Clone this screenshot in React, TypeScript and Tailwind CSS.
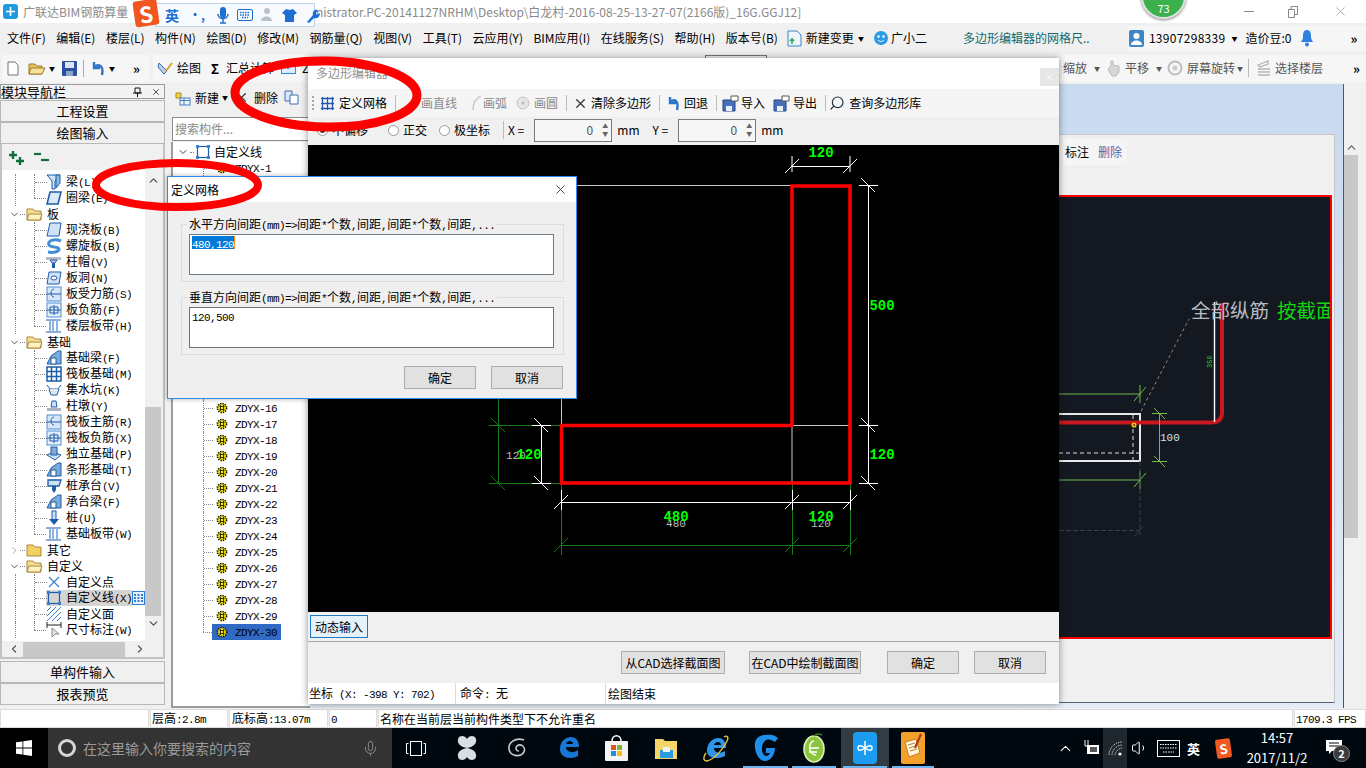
import { ChevronDown, ChevronRight, ChevronUp, ChevronLeft, X, Search, Mic, Volume1 } from "lucide-react";
import type { ReactNode } from "react";

const MONO = "font-['Liberation_Mono',monospace] text-[11px] tracking-[-0.6px]";

// SimSun look: ascii half width, cjk full width
function Sim({ t }: { t: string }) {
  return (
    <span className="whitespace-pre">
      {t.split(/([\x20-\x7e]+)/).map((p, i) =>
        /^[\x20-\x7e]+$/.test(p) ? (
          <span key={i} className={MONO}>{p}</span>
        ) : (
          <span key={i}>{p}</span>
        )
      )}
    </span>
  );
}

function Svg({ w = 16, h = 16, vb, children, className }: { w?: number; h?: number; vb?: string; children: ReactNode; className?: string }) {
  return (
    <svg width={w} height={h} viewBox={vb || `0 0 ${w} ${h}`} fill="none" className={"shrink-0 " + (className || "")}>
      {children}
    </svg>
  );
}

const B = "#1d5cab";
const treeIcons: Record<string, ReactNode> = {
  beam: <><path d="M1 1h13l-5 6v8H6V7z" fill="#cfe2f5" stroke={B} /><path d="M10 1h4v8l-4 5z" fill="#8fb9e4" stroke={B} /></>,
  ring: <path d="M4 2h11l-3 12H1z" fill="#dbe9f8" stroke={B} strokeWidth="1.6" />,
  slab: <path d="M4 1h11l-2 13H1z" fill="#cfe2f5" stroke={B} />,
  spiral: <path d="M15 3C8 0 1 3 3 7c2 3 9 1 10 4 0 3-6 4-11 3" stroke="#3f8fd9" strokeWidth="3" />,
  cap: <><rect x="0" y="3" width="15" height="3" fill="#b7bcc4" /><path d="M4 6h7l-2 3H6z" fill="#ccd" stroke={B} /><rect x="6" y="9" width="3" height="5" fill={B} /></>,
  hole: <><path d="M3 2h12l-2 12H1z" fill="#cfe2f5" stroke={B} /><ellipse cx="8" cy="8" rx="3" ry="2" fill="#fff" stroke={B} /></>,
  rebar: <><rect x="1" y="1" width="14" height="14" fill="#d6e6f7" stroke="#4f8fd3" /><path d="M1 8h14M8 3c-4 0-4 8 0 8" stroke={B} /></>,
  neg: <><rect x="1" y="1" width="14" height="14" fill="#e4eef9" stroke="#4f8fd3" /><path d="M1 8h14M4 5h8v6H4zM8 3v10" stroke={B} /></>,
  band: <><path d="M0 2h15M0 14h15" stroke={B} /><path d="M4 3v10M11 3v10M7 3v10" stroke="#5c95d6" strokeWidth="1.4" /></>,
  fbeam: <><path d="M1 14l4-8 7-5h3v13z" fill="#7fa9d8" stroke={B} /><path d="M5 14V8h5v6z" fill="#fff" stroke={B} /></>,
  raft: <><rect x="1" y="1" width="14" height="14" fill="#fff" stroke={B} strokeWidth="1.5" /><path d="M1 5.5h14M1 10.5h14M5.5 1v14M10.5 1v14" stroke={B} strokeWidth="1.5" /></>,
  pit: <><path d="M1 3l3 4h8l3-4" stroke={B} /><path d="M3 7l2 6h6l2-6" fill="#dfe6ee" stroke={B} /></>,
  pier: <><path d="M6 3h4l1 6H5z" fill="#cfe2f5" stroke={B} /><rect x="1" y="10" width="14" height="3" fill="#aab4c0" /></>,
  alone: <><path d="M1 9l6-3 8 3-6 5z" fill="#cfe2f5" stroke={B} /><rect x="5" y="1" width="6" height="8" fill="#7fa9d8" stroke={B} /></>,
  cap2: <><path d="M2 2h13l-2 6H2z" fill="#cfe2f5" stroke={B} strokeWidth="1.3" /><rect x="6" y="8" width="4" height="4" fill={B} /><path d="M6 12h4l-2 3z" fill={B} /></>,
  pile: <><rect x="6" y="1" width="4" height="9" fill="#cfe2f5" stroke={B} /><path d="M3 9h10l-5 6z" fill={B} /></>,
  point: <path d="M3 3l10 10M13 3L3 13" stroke="#3b7fcf" strokeWidth="1.3" />,
  line: <><rect x="2.5" y="2.5" width="11" height="11" stroke={B} strokeWidth="1.2" /><rect x="1" y="1" width="3" height="3" fill="#3b7fcf" /><rect x="12" y="1" width="3" height="3" fill="#3b7fcf" /><rect x="1" y="12" width="3" height="3" fill="#3b7fcf" /><rect x="12" y="12" width="3" height="3" fill="#3b7fcf" /></>,
  face: <path d="M1 5L5 1M1 10L10 1M1 15L15 1M6 15L15 6M11 15l4-4M3 3L1 5" stroke="#3b7fcf" />,
  dim: <><path d="M1 3h14M1 0v6M15 0v6" stroke="#222" /><path d="M6 6l0 9 3-3 4 0z" fill="#e8e8e8" stroke="#888" /></>,
};

function Folder({ open }: { open?: boolean }) {
  return (
    <Svg w={17} h={14}>
      <path d="M1 2h6l2 2h6v9H1z" fill={open ? "#f6dc95" : "#f4cf63"} stroke="#a98a3c" />
      {open && <path d="M3 7h13l-2 6H1z" fill="#fdf0c0" stroke="#a98a3c" />}
    </Svg>
  );
}

function Leaf({ icon, t, last, sel }: { icon: string; t: string; last?: boolean; sel?: boolean }) {
  return (
    <div className="flex h-4 items-center">
      <span className="ml-[13px] h-4 w-[19px] border-l border-dotted border-[#888]" />
      <span className={"relative h-4 w-[12px] border-dotted border-[#888] " + (last ? "" : "border-l")}>
        {last && <span className="absolute left-0 top-0 h-2 border-l border-dotted border-[#888]" />}
        <span className="absolute left-0 top-2 w-[12px] border-t border-dotted border-[#888]" />
      </span>
      <span className={"flex h-4 items-center " + (sel ? "bg-[#d4d4d4]" : "")}>
        <Svg>{treeIcons[icon]}</Svg>
        <span className="ml-[4px] text-[12px] leading-4 text-black"><Sim t={t} /></span>
      </span>
      {sel && (
        <Svg w={13} h={14} className="bg-[#e9f1fb]">
          <rect x="0.5" y="0.5" width="12" height="13" stroke="#2f7fd6" />
          <path d="M3 3v8M6.5 3v8M10 3v8" stroke="#2f7fd6" strokeWidth="2" strokeDasharray="2 1" />
        </Svg>
      )}
    </div>
  );
}

function Group({ t, open = true }: { t: string; open?: boolean }) {
  return (
    <div className="flex h-4 items-center">
      <span className="ml-[7px] w-[11px]">
        {open ? <ChevronDown size={11} strokeWidth={2} className="text-[#444]" /> : <ChevronRight size={11} strokeWidth={2} className="text-[#999]" />}
      </span>
      <span className="mr-[1px] w-[5px] border-t border-dotted border-[#888]" />
      <Folder open={open} />
      <span className="ml-[4px] text-[12px] leading-4 text-black">{t}</span>
    </div>
  );
}

function Gear() {
  return (
    <Svg w={12} h={12}>
      <circle cx="6" cy="6" r="4.6" fill="#f3e300" stroke="#111" strokeDasharray="1.4 1" strokeWidth="1.6" />
      <path d="M3.5 4.5h5M3.5 7.5h5M4.5 3v6M7.5 3v6" stroke="#111" strokeWidth="0.8" />
    </Svg>
  );
}

function NavButton({ t }: { t: string }) {
  return (
    <div className="flex h-[22px] items-center justify-center border border-[#b8b8b8] bg-[#f0f0f0] text-[13px] leading-4 text-black">
      {t}
    </div>
  );
}

function LeftNav() {
  return (
    <div className="flex w-[165px] shrink-0 flex-col">
      <div className="flex h-[15px] items-center justify-between border border-[#9a9a9a] bg-[#f3f3f3] pr-[3px] text-[13px] leading-none text-black">
        <span>模块导航栏</span>
        <span className="flex items-center gap-[9px]">
          <Svg w={9} h={10}><path d="M2 1h5v5H2zM0 6h9M4.5 6v4" stroke="#111" /></Svg>
          <X size={10} className="text-[#333]" />
        </span>
      </div>
      <div className="mt-[1px] flex flex-col">
        <NavButton t="工程设置" />
        <NavButton t="绘图输入" />
      </div>
      <div className="flex h-[515px] flex-col border-2 border-[#c2c2c2] border-t-0 bg-[#f0f0f0]">
        <div className="flex h-[26px] shrink-0 items-center gap-[9px] pl-[5px]">
          <Svg w={18} h={17}>
            <path d="M6 2v8M2 6h8" stroke="#0e6f3c" strokeWidth="2.4" />
            <path d="M13 8v8M9 12h8" stroke="#0e6f3c" strokeWidth="2.4" />
          </Svg>
          <Svg w={16} h={12}>
            <path d="M0 3h7" stroke="#0e6f3c" strokeWidth="2.2" />
            <path d="M7 9h8" stroke="#0e6f3c" strokeWidth="2.2" />
          </Svg>
        </div>
        <div className="flex min-h-0 flex-1">
          <div className="flex w-[143px] flex-col overflow-hidden bg-white pt-[4px]">
            <Leaf icon="beam" t="梁(L)" />
            <Leaf icon="ring" t="圈梁(E)" last />
            <Group t="板" />
            <Leaf icon="slab" t="现浇板(B)" />
            <Leaf icon="spiral" t="螺旋板(B)" />
            <Leaf icon="cap" t="柱帽(V)" />
            <Leaf icon="hole" t="板洞(N)" />
            <Leaf icon="rebar" t="板受力筋(S)" />
            <Leaf icon="neg" t="板负筋(F)" />
            <Leaf icon="band" t="楼层板带(H)" last />
            <Group t="基础" />
            <Leaf icon="fbeam" t="基础梁(F)" />
            <Leaf icon="raft" t="筏板基础(M)" />
            <Leaf icon="pit" t="集水坑(K)" />
            <Leaf icon="pier" t="柱墩(Y)" />
            <Leaf icon="rebar" t="筏板主筋(R)" />
            <Leaf icon="neg" t="筏板负筋(X)" />
            <Leaf icon="alone" t="独立基础(P)" />
            <Leaf icon="fbeam" t="条形基础(T)" />
            <Leaf icon="cap2" t="桩承台(V)" />
            <Leaf icon="fbeam" t="承台梁(F)" />
            <Leaf icon="pile" t="桩(U)" />
            <Leaf icon="band" t="基础板带(W)" last />
            <Group t="其它" open={false} />
            <Group t="自定义" />
            <Leaf icon="point" t="自定义点" />
            <Leaf icon="line" t="自定义线(X)" sel />
            <Leaf icon="face" t="自定义面" />
            <Leaf icon="dim" t="尺寸标注(W)" last />
          </div>
          <div className="flex w-[16px] flex-col items-center">
            <ChevronUp size={13} strokeWidth={2.4} className="mt-[4px] text-[#555]" />
            <div className="mt-[220px] h-[209px] w-full bg-[#c8c8c8]" />
            <ChevronDown size={13} strokeWidth={2.4} className="mt-[1px] text-[#555]" />
          </div>
        </div>
        <div className="flex h-[16px] shrink-0 items-center">
          <ChevronLeft size={12} strokeWidth={2.4} className="ml-[6px] text-[#555]" />
          <div className="ml-[3px] h-[15px] w-[102px] bg-[#c8c8c8]" />
          <ChevronRight size={12} strokeWidth={2.4} className="ml-[9px] text-[#555]" />
        </div>
      </div>
      <div className="mt-[2px] flex flex-col">
        <NavButton t="单构件输入" />
        <NavButton t="报表预览" />
      </div>
    </div>
  );
}

function CompPanel() {
  const names = Array.from({ length: 30 }, (_, i) => `ZDYX-${i + 1}`);
  return (
    <div className="ml-[6px] flex w-[139px] shrink-0 flex-col">
      <div className="flex h-[31px] shrink-0 items-center rounded-tl bg-[#f0f0f0] pb-[4px] pl-[4px] text-[12px] text-black">
        <Svg>
          <path d="M1 3h5v5H1z" fill="#f2d33f" stroke="#a58a20" />
          <rect x="5" y="8" width="10" height="7" fill="#e8f0fa" stroke="#4d7fc0" />
          <path d="M5 10.5h10M9 8v7" stroke="#4d7fc0" />
        </Svg>
        <span className="ml-[4px]">新建</span>
        <span className="ml-[3px] text-[6px]">▼</span>
        <X size={15} strokeWidth={2} className="ml-[6px] text-[#333]" />
        <span className="ml-[5px]">删除</span>
        <Svg w={15} h={15} className="ml-[6px]">
          <path d="M1 1h7v10H1z" fill="#dbe8f7" stroke="#3d6fb0" />
          <path d="M6 5h8v9H6z" fill="#fff" stroke="#3d6fb0" />
        </Svg>
      </div>
      <div className="mx-[1px] mt-[2px] flex h-[24px] shrink-0 items-center border border-[#8a8a8a] bg-white pl-[2px] text-[12px] text-[#8a8a8a]">
        搜索构件...
      </div>
      <div className="mt-[1px] flex min-h-0 flex-1 flex-col overflow-hidden border-l-2 border-b-2 border-[#9c9c9c] bg-white pt-[2px]">
        <div className="flex h-4 items-center">
          <ChevronDown size={12} strokeWidth={2} className="ml-[4px] text-[#444]" />
          <span className="ml-[1px] w-[4px] border-t border-dotted border-[#888]" />
          <Svg className="ml-[1px]">{treeIcons.line}</Svg>
          <span className="ml-[3px] text-[12px] leading-4">自定义线</span>
        </div>
        {names.map((n, i) => (
          <div key={n} className="flex h-4 items-center">
            <span className={"relative ml-[30px] h-4 w-[9px] border-dotted border-[#888] " + (i < 29 ? "border-l" : "")}>
              {i === 29 && <span className="absolute left-0 top-0 h-2 border-l border-dotted border-[#888]" />}
              <span className="absolute left-0 top-2 w-[9px] border-t border-dotted border-[#888]" />
            </span>
            <span className={"flex h-4 w-[69px] items-center pl-[4px] " + (i === 29 ? "bg-[#316ac5]" : "")}>
              <Gear />
              <span className="ml-[7px] text-[12px] leading-4 text-black"><Sim t={n} /></span>
            </span>
          </div>
        ))}
      </div>
    </div>
  );
}

function Workspace() {
  return (
    <div className="flex min-w-0 flex-1">
      <div className="flex w-[1033px] flex-col bg-gradient-to-b from-[#c9daef] to-[#e3ebf6] pb-[5px] pt-[50px]">
        <div className="ml-[2px] mr-[8px] flex flex-1 flex-col border border-[#c6c6c6] border-b-[#556070] bg-[#f0f0f0] p-[2px]">
          <div className="flex h-[58px] shrink-0 items-start justify-start bg-[#f0f0f0] pl-[748px] pt-[2px]">
            <div className="flex h-[26px] w-[64px] items-center bg-[#f5f5f5] pl-[2px] text-[12px]">
              <span>标注</span>
              <span className="ml-[9px] text-[#5566aa]">删除</span>
            </div>
          </div>
          <div className="h-[444px] shrink-0 border-2 border-[#ff0000] bg-[#141821]">
            <svg viewBox="317 197 1013 440" className="block h-full w-full" fill="none">
              <path d="M1059 394h81M1059 480h81" stroke="#6fb94f" />
              <path d="M1134 401l12-14M1134 487l12-14M1140 385v18M1140 471v18" stroke="#6fb94f" />
              <path d="M1059 414h81v47h-81" stroke="#e8e8e8" strokeWidth="2" />
              <path d="M1133 415v46M1059 453h81" stroke="#ddd" strokeDasharray="4 3" />
              <path d="M1059 422.5h152q11 0 11-10V303" stroke="#c8171e" strokeWidth="4" />
              <path d="M1214.5 302v120" stroke="#fff" strokeWidth="1.4" />
              <circle cx="1134" cy="425" r="1.8" stroke="#f1c40f" strokeWidth="1.5" />
              <path d="M1141 411l48-92" stroke="#8a8a8a" strokeDasharray="3 3" />
              <path d="M1140 461v74M1059 530.5h81M1135 536l9-11" stroke="#39404c" strokeDasharray="5 2" />
              <path d="M1159.5 413v48M1152 413.5h15M1152 461.5h15M1154 408l11 11M1154 456l11 11" stroke="#6fb94f" />
              <text x="1160" y="441" fill="#cfe0f0" fontSize="11" fontFamily="Liberation Mono">100</text>
              <text transform="translate(1212 368) rotate(-90)" fill="#11d611" fontSize="7" fontFamily="Liberation Mono">350</text>
              <text x="1191" y="318" fill="#b8bcc2" fontSize="19.5" fontFamily="Noto Sans CJK SC">全部纵筋</text>
              <text x="1277" y="318" fill="#11d611" fontSize="19.5" fontFamily="Noto Sans CJK SC">按截面</text>
            </svg>
          </div>
          <div className="flex-1 bg-[#f0f0f0]" />
        </div>
      </div>
      <div className="flex w-[23px] flex-col border-l border-[#555] bg-[#f0f0f0]">
        <div className="mt-[50px] flex h-[454px] w-[14px] flex-col items-center">
          <ChevronUp size={13} strokeWidth={2.4} className="mt-[7px] text-[#666]" />
          <div className="mt-[1px] h-[383px] w-full bg-[#c8c8c8]" />
        </div>
        <div className="flex-1" />
      </div>
    </div>
  );
}

// ---- 定义网格 canvas ----

function Tick({ x, y, c = "#fff" }: { x: number; y: number; c?: string }) {
  return <path d={`M${x - 7} ${y + 7}L${x + 7} ${y - 7}`} stroke={c} />;
}

function Tick2({ x, y, c = "#fff" }: { x: number; y: number; c?: string }) {
  return <path d={`M${x - 7} ${y - 7}L${x + 7} ${y + 7}`} stroke={c} />;
}

function EditorCanvas() {
  const G = "#177c17";
  return (
    <svg viewBox="308 145 751 467" className="block h-[467px] w-full shrink-0 bg-black" fill="none">
      <path d="M308 185.5H792M561.5 300V425M792 425.5V483M792 425.5H850" stroke="#c8c8c8" />
      {/* top */}
      <path d="M792 166.5H850M792 156V172M850 156V172" stroke="#fff" />
      <Tick x={792} y={166} /><Tick x={850} y={166} />
      {/* right */}
      <path d="M868.5 185V483M859 185.5H878M859 425.5H878M859 483.5H878" stroke="#fff" />
      <Tick2 x={868} y={185} /><Tick2 x={868} y={425} /><Tick2 x={868} y={483} />
      {/* left */}
      <path d="M498.5 398V483M489 425.5H532M489 483.5H532" stroke={G} />
      <Tick2 x={498} y={425} c={G} /><Tick2 x={498} y={483} c={G} />
      <path d="M541.5 425V483M532 425.5H551M532 483.5H551" stroke="#fff" />
      <Tick2 x={541} y={425} /><Tick2 x={541} y={483} />
      <path d="M551 425.5H561M551 483.5H561" stroke={G} />
      {/* bottom */}
      <path d="M561 502.5H850M561.5 490V510M792.5 490V510M850.5 490V510" stroke="#fff" />
      <Tick x={561} y={502} /><Tick x={792} y={502} /><Tick x={850} y={502} />
      <path d="M561.5 483V490M792.5 483V490M850.5 483V490M561.5 510V555M792.5 510V555M850.5 510V555M561 545.5H850" stroke={G} />
      <Tick x={561} y={545} c={G} /><Tick x={792} y={545} c={G} /><Tick x={850} y={545} c={G} />
      {/* polygon */}
      <path d="M792 186H850V483H561.5V425.5H792Z" stroke="#ff0000" strokeWidth="3.5" />
      <g fontFamily="Liberation Mono" fontSize="11" fill="#bdbdbd" textAnchor="middle">
        <text x="516" y="459">120</text>
        <text x="676" y="527">480</text>
        <text x="821" y="527">120</text>
      </g>
      <g fontFamily="Liberation Mono" fontWeight="700" fontSize="14" fill="#00ff00" textAnchor="middle">
        <text x="821" y="157">120</text>
        <text x="882" y="310">500</text>
        <text x="882" y="459">120</text>
        <text x="529" y="459">120</text>
        <text x="676" y="521">480</text>
        <text x="821" y="521">120</text>
      </g>
    </svg>
  );
}

function WinBtn({ t, cls }: { t: string; cls: string }) {
  return (
    <div className={"flex h-[23px] items-center justify-center border border-[#adadad] bg-[#e1e1e1] text-[12px] text-black " + cls}>
      {t}
    </div>
  );
}

function Radio({ on }: { on?: boolean }) {
  return (
    <span className="flex h-[11px] w-[11px] shrink-0 items-center justify-center rounded-full border border-[#999] bg-white">
      {on && <span className="h-[5px] w-[5px] rounded-full bg-[#333]" />}
    </span>
  );
}

function Spin() {
  return (
    <div className="flex h-[23px] w-[78px] items-center justify-end border border-[#7a7a7a] bg-[#f6f6f6] pr-[3px] text-[12px] text-[#555]">
      0
      <span className="ml-[9px] flex flex-col text-[6px] leading-[8px] text-[#666]">
        <span>▲</span>
        <span>▼</span>
      </span>
    </div>
  );
}

function EditorWindow() {
  return (
    <div className="absolute left-[308px] top-[58px] flex h-[646px] w-[751px] flex-col bg-[#f0f0f0] shadow-[0_0_7px_rgba(0,0,0,0.45)]">
      <div className="flex h-[31px] shrink-0 items-start justify-between bg-white">
        <span className="ml-[8px] mt-[7px] text-[12px] leading-4 text-[#8f8f8f]">多边形编辑器</span>
        <span className="mr-[0px] mt-[10px] flex h-[18px] w-[19px] items-center justify-center bg-[#e6e6e6]">
          <X size={9} className="text-white" />
        </span>
      </div>
      <div className="flex h-[28px] shrink-0 items-center bg-[#f5f5f5] text-[12px] text-black">
        <span className="ml-[4px] h-[14px] border-l-2 border-dotted border-[#aaa]" />
        <Svg w={15} h={15} className="ml-[6px]">
          <path d="M1 2.5h13M1 7.5h13M1 12.5h13M2.5 1v13M7.5 1v13M12.5 1v13" stroke="#2356b4" strokeWidth="1.3" />
        </Svg>
        <span className="ml-[4px]">定义网格</span>
        <span className="ml-[8px] h-[16px] border-l border-[#bbb]" />
        <span className="ml-[25px] text-[#8a8a8a]">画直线</span>
        <Svg w={10} h={16} className="ml-[15px]"><path d="M1 15C1 8 4 3 9 1" stroke="#ccc" strokeWidth="1.5" /></Svg>
        <span className="ml-[1px] text-[#8a8a8a]">画弧</span>
        <Svg w={14} h={14} className="ml-[9px]">
          <circle cx="7" cy="7" r="6" fill="#e4e4e4" stroke="#c4c4c4" />
          <circle cx="7" cy="7" r="1.5" fill="#bbb" />
        </Svg>
        <span className="ml-[4px] text-[#8a8a8a]">画圆</span>
        <span className="ml-[8px] h-[16px] border-l border-[#bbb]" />
        <X size={15} strokeWidth={2} className="ml-[6px] text-[#333]" />
        <span className="ml-[3px]">清除多边形</span>
        <span className="ml-[8px] h-[16px] border-l border-[#bbb]" />
        <Svg w={13} h={15} className="ml-[7px]"><path d="M3 1v6h6M3 6c5-4 9-1 7 8" stroke="#2e74c9" strokeWidth="2.4" /></Svg>
        <span className="ml-[4px]">回退</span>
        <span className="ml-[8px] h-[16px] border-l border-[#bbb]" />
        <Svg w={17} h={17} className="ml-[5px]">
          <path d="M1 5h12v11H1z" fill="#4670b8" stroke="#24458a" />
          <rect x="4" y="11" width="6" height="5" fill="#e8eef8" />
          <path d="M9 1h7v5H9z" fill="#fff" stroke="#555" />
        </Svg>
        <span className="ml-[2px]">导入</span>
        <Svg w={17} h={17} className="ml-[8px]">
          <path d="M1 5h12v11H1z" fill="#4670b8" stroke="#24458a" />
          <rect x="4" y="11" width="6" height="5" fill="#e8eef8" />
          <path d="M9 1h7v5H9z" fill="#fff" stroke="#555" />
        </Svg>
        <span className="ml-[3px]">导出</span>
        <span className="ml-[8px] h-[16px] border-l border-[#bbb]" />
        <Search size={16} strokeWidth={1.8} className="ml-[3px] -scale-x-100 text-[#234]" />
        <span className="ml-[4px]">查询多边形库</span>
      </div>
      <div className="flex h-[28px] shrink-0 items-center bg-[#f0f0f0] pb-[2px] text-[12px] text-black">
        <span className="ml-[9px]"><Radio on /></span>
        <span className="ml-[4px]">不偏移</span>
        <span className="ml-[20px]"><Radio /></span>
        <span className="ml-[4px]">正交</span>
        <span className="ml-[12px]"><Radio /></span>
        <span className="ml-[4px]">极坐标</span>
        <span className="ml-[13px] h-[18px] border-l border-[#bbb]" />
        <span className="ml-[4px] mr-[10px]">X =</span>
        <Spin />
        <span className="ml-[5px]">mm</span>
        <span className="ml-[13px] mr-[10px]">Y =</span>
        <Spin />
        <span className="ml-[5px]">mm</span>
      </div>
      <EditorCanvas />
      <div className="flex h-[30px] shrink-0 items-center border-b border-[#a8a8a8] pl-[2px]">
        <div className="flex h-[23px] w-[58px] items-center justify-center border border-[#1b79c6] bg-[#e5f1fb] text-[12px] text-black">动态输入</div>
      </div>
      <div className="flex h-[41px] shrink-0 items-center pl-[313px]">
        <WinBtn t="从CAD选择截面图" cls="w-[104px]" />
        <WinBtn t="在CAD中绘制截面图" cls="ml-[24px] w-[112px]" />
        <WinBtn t="确定" cls="ml-[26px] w-[72px]" />
        <WinBtn t="取消" cls="ml-[15px] w-[72px]" />
      </div>
      <div className="flex h-[21px] shrink-0 bg-white text-[12px] text-black">
        <span className="flex w-[148px] items-center border-r border-[#ddd] pl-[1px]"><Sim t="坐标 (X: -398 Y: 702)" /></span>
        <span className="flex w-[150px] items-center border-r border-[#ddd] pl-[4px]"><Sim t="命令: 无" /></span>
        <span className="flex flex-1 items-center pl-[2px]">绘图结束</span>
      </div>
    </div>
  );
}

function GridDialog() {
  return (
    <div className="absolute left-[167px] top-[176px] flex h-[223px] w-[410px] flex-col border border-[#2f8fe6] bg-[#efefef] shadow-[0_0_5px_rgba(0,0,0,0.3)]">
      <div className="flex h-[25px] shrink-0 items-center justify-between bg-white pl-[3px] pr-[8px] text-[12px] text-black">
        <span>定义网格</span>
        <X size={15} strokeWidth={1.3} className="text-[#222]" />
      </div>
      <div className="relative ml-[13px] mr-[12px] mt-[22px] h-[58px] shrink-0 border border-[#dcdcdc] pl-[7px] pt-[9px]">
        <span className="absolute left-[5px] top-[-9px] bg-[#efefef] px-[2px] text-[12px] leading-4 text-black"><Sim t="水平方向间距(mm)=>间距*个数,间距,间距*个数,间距,..." /></span>
        <div className="h-[41px] w-[365px] border border-[#6b7b8a] bg-white pl-[2px] pt-[1px] text-[12px] leading-[13px]">
          <span className="inline-block h-[13px] border-r border-[#ff8a1f] bg-[#0078d7] text-[12px] leading-[13px] text-white">
            <Sim t="480,120" />
          </span>
        </div>
      </div>
      <div className="relative ml-[13px] mr-[12px] mt-[15px] h-[58px] shrink-0 border border-[#dcdcdc] pl-[7px] pt-[9px]">
        <span className="absolute left-[5px] top-[-9px] bg-[#efefef] px-[2px] text-[12px] leading-4 text-black"><Sim t="垂直方向间距(mm)=>间距*个数,间距,间距*个数,间距,..." /></span>
        <div className="h-[41px] w-[365px] border border-[#707070] bg-white pl-[2px] pt-[1px] text-[12px] leading-[13px] text-black">
          <Sim t="120,500" />
        </div>
      </div>
      <div className="mt-[11px] flex justify-end pr-[13px]">
        <WinBtn t="确定" cls="w-[72px]" />
        <WinBtn t="取消" cls="ml-[15px] w-[72px]" />
      </div>
    </div>
  );
}

function Sogou() {
  return (
    <div className="absolute left-[134px] top-0 flex h-[27px] w-[182px] items-center">
      <div className="ml-[21px] mt-[3px] flex h-[24px] w-[160px] items-center border border-[#bcd3ea] bg-[#f6fafe] pl-[9px]">
        <span className="text-[14px] font-bold leading-none text-[#1f6fd0]">英</span>
        <span className="ml-[10px] text-[12px] font-bold leading-none text-[#1f6fd0]">•,</span>
        <Svg w={12} h={17} className="ml-[12px]">
          <rect x="3" y="0" width="6" height="11" rx="3" fill="#1f6fd0" />
          <path d="M1 7c0 6 10 6 10 0M6 12v4M3 16h6" stroke="#1f6fd0" strokeWidth="1.5" />
        </Svg>
        <Svg w={16} h={12} className="ml-[8px]">
          <rect x="0.5" y="0.5" width="15" height="11" rx="1.5" stroke="#1f6fd0" />
          <path d="M3 3.5h10M3 6h10M5 8.5h6" stroke="#1f6fd0" strokeWidth="1.4" strokeDasharray="1.5 1" />
        </Svg>
        <Svg w={17} h={16} className="ml-[7px]">
          <circle cx="7" cy="4" r="3" fill="#b8c2cc" />
          <path d="M1 14c0-6 11-6 11 0z" fill="#b8c2cc" />
        </Svg>
        <Svg w={15} h={14} className="ml-[5px]"><path d="M4 1l3.5 1L11 1l4 4-3 2v7H3V7L0 5z" fill="#1f6fd0" /></Svg>
        <Svg w={15} h={15} className="ml-[8px]"><path d="M2 14l6-7c-1-4 2-6 5-5l-2 3 1 2 3-2c0 4-3 6-6 5l-5 5z" fill="#1f6fd0" /></Svg>
      </div>
      <div className="absolute left-0 top-0 flex h-[26px] w-[24px] -rotate-[8deg] items-center justify-center rounded-[3px] bg-[#f0561d] text-[22px] font-bold leading-none text-white">S</div>
    </div>
  );
}

function TitleBar() {
  return (
    <div className="relative flex h-[23px] shrink-0 items-center bg-white text-[12px] text-[#8a8a8a]">
      <div className="ml-[3px] flex h-[15px] w-[15px] items-center justify-center rounded-[3px] bg-[#1f9ae0]">
        <Svg w={11} h={11}><path d="M5.5 1v9M1 5.5h9" stroke="#fff" strokeWidth="1.6" /></Svg>
      </div>
      <span className="ml-[5px] w-[293px] shrink-0">广联达BIM钢筋算量</span>
      <span className="whitespace-nowrap">nistrator.PC-20141127NRHM\Desktop\白龙村-2016-08-25-13-27-07(2166版)_16G.GGJ12]</span>
      <Sogou />
      <div className="absolute left-[1141px] top-[-26px] flex h-[45px] w-[45px] items-end justify-center rounded-full border-2 border-[#dfe3df] bg-[#3ab14c] pb-[3px] text-[11px] leading-none text-white shadow-[0_1px_3px_rgba(0,0,0,0.5)]">73</div>
      <div className="absolute right-0 top-0 flex h-[23px] items-center text-[#888]">
        <span className="mr-[34px] w-[10px] border-t border-[#888]" />
        <Svg w={10} h={12} className="mr-[35px]"><path d="M.5 3.5h6v8h-6zM3 3V.5h6.5v8H7" stroke="#888" /></Svg>
        <X size={15} strokeWidth={1} className="mr-[18px]" />
      </div>
    </div>
  );
}

function MenuBar() {
  const items = ["文件(F)", "编辑(E)", "楼层(L)", "构件(N)", "绘图(D)", "修改(M)", "钢筋量(Q)", "视图(V)", "工具(T)", "云应用(Y)", "BIM应用(I)", "在线服务(S)", "帮助(H)", "版本号(B)"];
  return (
    <div className="flex h-[30px] shrink-0 items-center bg-[#f0f0f0] pl-[7px] text-[12px] text-black">
      <div className="flex gap-[10.5px]">
        {items.map((m) => <span key={m} className="whitespace-nowrap">{m}</span>)}
      </div>
      <Svg w={15} h={17} className="ml-[9px]">
        <path d="M1 1h9l4 4v11H1z" fill="#eef5fc" stroke="#3a83c8" />
        <path d="M5 9v5M3 11l2-2 2 2" stroke="#2fa84f" strokeWidth="1.6" />
      </Svg>
      <span className="ml-[4px]">新建变更</span>
      <span className="ml-[4px] text-[6px]">▼</span>
      <Svg w={16} h={16} className="ml-[9px]">
        <circle cx="8" cy="8" r="7" fill="#2a9be4" />
        <circle cx="5.5" cy="6.5" r="1.3" fill="#fff" />
        <circle cx="10.5" cy="6.5" r="1.3" fill="#fff" />
        <path d="M5 10c2 2 4 2 6 0" stroke="#fff" />
      </Svg>
      <span className="ml-[2px]">广小二</span>
      <span className="ml-[36px] w-[165px] whitespace-nowrap text-[#16686a]">多边形编辑器的网格尺..</span>
      <div className="flex h-[25px] flex-1 items-center bg-[#f6f6f6] pl-[1px]">
        <Svg w={15} h={17}>
          <rect width="15" height="17" rx="2" fill="#3f86c9" />
          <circle cx="7.5" cy="6" r="3" fill="#fff" />
          <path d="M2 15c0-6 11-6 11 0z" fill="#fff" />
        </Svg>
        <span className="ml-[5px] tracking-[0.3px]">13907298339</span>
        <span className="ml-[6px] text-[6px]">▼</span>
        <span className="ml-[8px]">造价豆:0</span>
        <Svg w={14} h={18} className="ml-[9px]">
          <path d="M7 1c4 0 4 4 4 7 0 3 2 4 2 5H1c0-1 2-2 2-5 0-3 0-7 4-7z" fill="#2f7fe0" />
          <circle cx="7" cy="15.5" r="2" fill="#2f7fe0" />
        </Svg>
        <span className="ml-[36px] text-[13px] font-bold leading-none">»</span>
      </div>
    </div>
  );
}

function ToolBar() {
  return (
    <div className="relative flex h-[31px] shrink-0 items-center bg-[#f0f0f0] pb-[1px] text-[12px] text-black">
      <div className="ml-[2px] flex h-[27px] w-[148px] items-center bg-[#f6f6f6] pl-[5px]">
        <Svg w={12} h={15}><path d="M1 1h7l3 3v10H1z" fill="#fff" stroke="#777" /></Svg>
        <Svg w={18} h={15} className="ml-[9px]">
          <path d="M1 3h6l2 2h5v8H1z" fill="#e9c15a" stroke="#9a7a2c" />
          <path d="M3 7h14l-3 6H1z" fill="#f8e29a" stroke="#9a7a2c" />
        </Svg>
        <span className="ml-[3px] text-[6px]">▼</span>
        <Svg w={15} h={15} className="ml-[7px]">
          <rect width="15" height="15" rx="1" fill="#2e4f9e" />
          <rect x="3" y="1" width="9" height="6" fill="#dbe5f5" />
          <rect x="4" y="10" width="7" height="5" fill="#8aa3cf" />
        </Svg>
        <span className="ml-[6px] h-[17px] border-l border-[#aaa]" />
        <Svg w={14} h={15} className="ml-[7px]"><path d="M3 1v6h6M3 6c5-4 10-1 8 8" stroke="#2e74c9" strokeWidth="2.4" /></Svg>
        <span className="ml-[4px] text-[6px]">▼</span>
        <span className="ml-[18px] text-[13px] font-bold leading-none">»</span>
      </div>
      <div className="ml-[3px] flex h-[27px] flex-1 items-center bg-[#f6f6f6] pl-[4px]">
        <Svg w={16} h={16}>
          <path d="M2 3l8 8-3 3-6-7z" fill="#bcd0e8" stroke="#3a6bb0" />
          <path d="M9 11l6-8" stroke="#d8a536" strokeWidth="2" />
        </Svg>
        <span className="ml-[4px]">绘图</span>
        <span className="ml-[10px] text-[13px] font-bold leading-none">Σ</span>
        <span className="ml-[7px]">汇总计算</span>
        <Svg w={15} h={12} className="ml-[7px]">
          <rect x="0.5" y="0.5" width="14" height="11" fill="#dcecfa" stroke="#2d8fe0" />
          <path d="M1 1l6 6 7-6" stroke="#2d8fe0" />
        </Svg>
        <span className="ml-[6px]">Z</span>
        <span className="ml-auto flex items-center text-[#555]">
          <span>缩放</span>
          <span className="ml-[7px] text-[6px]">▼</span>
          <Svg w={15} h={18} className="ml-[6px]"><path d="M5 6V2h2v4l6 1v6l-3 4H6l-4-6z" fill="#d6d6d6" stroke="#bbb" /></Svg>
          <span className="ml-[4px]">平移</span>
          <span className="ml-[7px] text-[6px]">▼</span>
          <Svg w={16} h={18} className="ml-[5px]"><circle cx="8" cy="9" r="6.5" stroke="#bdbdbd" strokeWidth="2" /><circle cx="8" cy="9" r="2.5" fill="#ccc" /></Svg>
          <span className="ml-[4px]">屏幕旋转</span>
          <span className="ml-[2px] text-[6px]">▼</span>
          <span className="ml-[5px] h-[18px] border-l border-[#bbb]" />
          <Svg w={14} h={16} className="ml-[8px]"><path d="M1 5l10-4v3l-8 3zM1 9h12M1 12h12M1 15h12" stroke="#b5b5b5" strokeWidth="1.3" /></Svg>
          <span className="ml-[4px]">选择楼层</span>
          <span className="ml-[30px] mr-[6px] text-[13px] font-bold leading-none text-black">»</span>
        </span>
      </div>
      <div className="absolute left-[705px] top-[2px] h-[6px] w-[62px] border border-[#777]" />
    </div>
  );
}

function StatusBar() {
  const cell = "flex h-[19px] items-center border border-[#dcdcdc] bg-white text-[12px] text-black";
  return (
    <div className="flex h-[20px] shrink-0 gap-[1px] bg-[#f0f0f0] pt-[1px]">
      <span className={cell + " w-[149px] bg-[#f7f7f7]"} />
      <span className={cell + " w-[78px] pl-[1px]"}><Sim t="层高:2.8m" /></span>
      <span className={cell + " w-[99px] pl-[2px]"}><Sim t="底标高:13.07m" /></span>
      <span className={cell + " w-[48px] pl-[1px]"}><Sim t="0" /></span>
      <span className={cell + " w-[915px] pl-[1px]"}><Sim t="名称在当前层当前构件类型下不允许重名" /></span>
      <span className={cell + " flex-1 pl-[1px]"}><Sim t="1709.3 FPS" /></span>
    </div>
  );
}

function AppIcon({ children, on, active, cls }: { children: ReactNode; on?: boolean; active?: boolean; cls: string }) {
  return (
    <div className={"relative flex h-10 shrink-0 items-center justify-center " + cls + (active ? " bg-[#333c42]" : "")}>
      {children}
      {on && <span className="absolute bottom-0 left-[2px] right-[2px] h-[2px] bg-[#6db5f0]" />}
    </div>
  );
}

function TaskBar() {
  return (
    <div className="flex h-10 shrink-0 items-center bg-[#00080f] text-white">
      <div className="flex h-10 w-[48px] items-center justify-center bg-black">
        <Svg w={16} h={16}>
          <path d="M0 2.3l6.5-.9v6.2H0zM7.3 1.3L16 0v7.6H7.3zM0 8.4h6.5v6.2L0 13.7zM7.3 8.4H16V16l-8.7-1.2z" fill="#fff" />
        </Svg>
      </div>
      <div className="flex h-10 w-[344px] items-center bg-[#333333] pl-[10px] text-[14px] text-[#9a9a9a]">
        <span className="h-[18px] w-[18px] rounded-full border-[3px] border-[#d5d5d5]" />
        <span className="ml-[7px] flex-1">在这里输入你要搜索的内容</span>
        <Mic size={17} strokeWidth={1.4} className="mr-[13px] text-[#8a8a8a]" />
      </div>
      <AppIcon cls="w-[48px]">
        <Svg w={20} h={15}>
          <rect x="4.5" y="0.5" width="11" height="14" stroke="#fff" />
          <path d="M2.5 2.5H.5v10h2M17.5 2.5h2v10h-2" stroke="#fff" />
        </Svg>
      </AppIcon>
      <AppIcon cls="ml-[2px] w-[50px]">
        <Svg w={22} h={26}>
          <path d="M11 13C5 12 1 9 2 4c1-4 7-4 9 0 0 3 0 6 0 9zM11 13c6-1 10-4 9-9-1-4-7-4-9 0zM11 13c-6 1-10 4-9 9 1 4 7 4 9 0zM11 13c6 1 10 4 9 9-1 4-7 4-9 0z" fill="#d8dee3" />
        </Svg>
      </AppIcon>
      <AppIcon cls="w-[49px]">
        <Svg w={20} h={22}>
          <path d="M17 3C8 0 1 6 2 12c1 7 11 9 15 3 2-5-3-9-7-6-2 2-1 5 2 5" stroke="#c9c9c9" strokeWidth="1.6" />
        </Svg>
      </AppIcon>
      <AppIcon cls="w-[55px]">
        <Svg w={22} h={24}>
          <path d="M2 13C2 5 8 1 13 1c5 0 8 4 8 10H8c0 5 7 7 12 3v6c-7 4-18 2-18-7zm6-5h7c0-4-6-4-7 0z" fill="#1577d6" />
        </Svg>
      </AppIcon>
      <AppIcon cls="w-[41px]">
        <Svg w={23} h={26}>
          <path d="M7 6c0-7 9-7 9 0" stroke="#fff" strokeWidth="1.5" />
          <rect x="0" y="6" width="23" height="20" rx="1" fill="#f4f4f4" />
          <rect x="6" y="10" width="5" height="5" fill="#e8502a" />
          <rect x="12" y="10" width="5" height="5" fill="#7cb82f" />
          <rect x="6" y="16" width="5" height="5" fill="#1b8fe0" />
          <rect x="12" y="16" width="5" height="5" fill="#f6b91c" />
        </Svg>
      </AppIcon>
      <AppIcon cls="ml-[4px] w-[50px]">
        <Svg w={22} h={24}>
          <path d="M0 3h8l2 2h12v18H0z" fill="#f4d569" />
          <rect x="5" y="14" width="13" height="8" fill="#2d9be0" />
          <rect x="8" y="11" width="7" height="5" fill="#eaf4fb" />
        </Svg>
      </AppIcon>
      <AppIcon cls="w-[49px]">
        <Svg w={26} h={30} className="mt-[2px]">
          <path d="M4 17C4 9 10 4 15 4c6 0 8 5 8 10H11c0 5 6 6 11 3v5c-8 4-18 2-18-5zm7-6h7c0-4-6-4-7 0z" fill="#2f95e8" />
          <path d="M21 3c3-2 5 0 3 4-3 7-12 18-20 20-4 0-4-4-1-8" stroke="#e8c53a" strokeWidth="1.4" />
        </Svg>
      </AppIcon>
      <AppIcon cls="ml-[1px] w-[49px]" on>
        <Svg w={25} h={30}>
          <path d="M13 2C4 2 1 8 2 15c1 8 6 14 11 13 6-1 9-8 9-13h-9v5h4c-1 3-4 4-6 2-3-3-3-12 2-15 3-1 6 0 9 2l3-4c-3-3-7-4-12-3z" fill="#1d8fea" />
        </Svg>
      </AppIcon>
      <AppIcon cls="w-[48px]" on>
        <Svg w={24} h={32}>
          <ellipse cx="12" cy="17" rx="10" ry="13" fill="#8bc53f" stroke="#d8f0b4" strokeWidth="1.6" />
          <path d="M7 16h10M7 20h8M12 9c-6 0-6 14 2 14" stroke="#fff" strokeWidth="1.5" />
          <path d="M12 4c3-3 6-2 8-1" stroke="#3a7d1e" strokeWidth="1.5" />
        </Svg>
      </AppIcon>
      <AppIcon cls="ml-[3px] w-[48px]" on active>
        <div className="flex h-8 w-6 items-center justify-center rounded-[4px] bg-[#1d9bf0]">
          <Svg w={18} h={18}>
            <path d="M9 2v14M2 9c0-3 3-3 7 0s7 3 7 0-3-3-7 0-7 3-7 0z" stroke="#fff" strokeWidth="1.5" />
          </Svg>
        </div>
      </AppIcon>
      <AppIcon cls="ml-[1px] w-[46px]" on>
        <Svg w={24} h={32}>
          <rect width="24" height="32" rx="2" fill="#f4a12c" />
          <path d="M4 10l11-3 4 14-11 4z" fill="#fdf3d6" stroke="#c77a1a" />
          <path d="M7 13l7-2M8 16l7-2M9 19l7-2" stroke="#b08a4a" />
          <path d="M20 2l-6 14" stroke="#a8371a" strokeWidth="2" />
        </Svg>
      </AppIcon>
      <div className="ml-[121px] flex h-10 items-center">
        <ChevronUp size={17} strokeWidth={1.5} />
        <Svg w={16} h={16} className="ml-[9px]">
          <rect x="4" y="5" width="12" height="9" fill="#fff" />
          <rect x="7" y="7" width="7" height="5" fill="#555" />
          <path d="M2 0v6h3V0" stroke="#fff" />
        </Svg>
        <div className="ml-[4px] flex h-10 w-[24px] items-center justify-center bg-[#1f282e]">
          <Svg w={15} h={15}>
            <path d="M1 14C1 7 7 1 14 1M4 14c0-5 5-10 10-10M7 14c0-3 4-7 7-7" stroke="#bbb" strokeDasharray="1.5 .8" />
            <circle cx="12" cy="13" r="1.6" fill="#fff" />
          </Svg>
        </div>
        <Volume1 size={18} strokeWidth={1.3} className="ml-[4px]" />
        <Svg w={23} h={17} className="ml-[8px]">
          <rect x="0.5" y="0.5" width="22" height="16" stroke="#fff" />
          <path d="M3 4.5h17M3 8h17M6 12h11" stroke="#fff" strokeDasharray="1.5 1" />
        </Svg>
        <span className="ml-[7px] text-[13px] font-bold leading-none">英</span>
        <div className="ml-[16px] flex h-[19px] w-[15px] -rotate-[8deg] items-center justify-center rounded-[2px] bg-[#ef5a22] text-[13px] font-bold leading-none">S</div>
        <div className="ml-[12px] flex w-[68px] flex-col items-center text-[13px] leading-5">
          <span>14:57</span>
          <span>2017/11/2</span>
        </div>
        <div className="relative ml-[15px] h-10 w-[28px]">
          <Svg w={16} h={16} className="absolute left-0 top-[11px]">
            <path d="M0 1h16v11H6l-3 3v-3H0z" fill="#fff" />
            <path d="M3 4h10M3 7h10" stroke="#00080f" />
          </Svg>
          <span className="absolute left-[7px] top-[17px] flex h-[17px] w-[17px] items-center justify-center rounded-full border border-[#888] bg-[#3a3a3a] text-[11px] font-bold leading-none">2</span>
        </div>
      </div>
    </div>
  );
}

export default function App() {
  return (
    <div className="relative flex h-[768px] w-[1366px] flex-col overflow-hidden bg-[#f0f0f0] font-['Noto_Sans_CJK_SC','Liberation_Sans',sans-serif]">
      <TitleBar />
      <MenuBar />
      <ToolBar />
      <div className="flex min-h-0 flex-1">
        <LeftNav />
        <CompPanel />
        <Workspace />
      </div>
      <StatusBar />
      <TaskBar />
      <EditorWindow />
      <GridDialog />
      {/* hand drawn red marks on the screenshot */}
      <svg viewBox="0 0 1366 768" className="pointer-events-none absolute inset-0 h-[768px] w-[1366px]" fill="none">
        <ellipse cx="326" cy="94" rx="91" ry="33" stroke="#ff0000" strokeWidth="9" transform="rotate(1 326 94)" />
        <ellipse cx="177" cy="185" rx="81" ry="22" stroke="#ff0000" strokeWidth="8" />
      </svg>
    </div>
  );
}
